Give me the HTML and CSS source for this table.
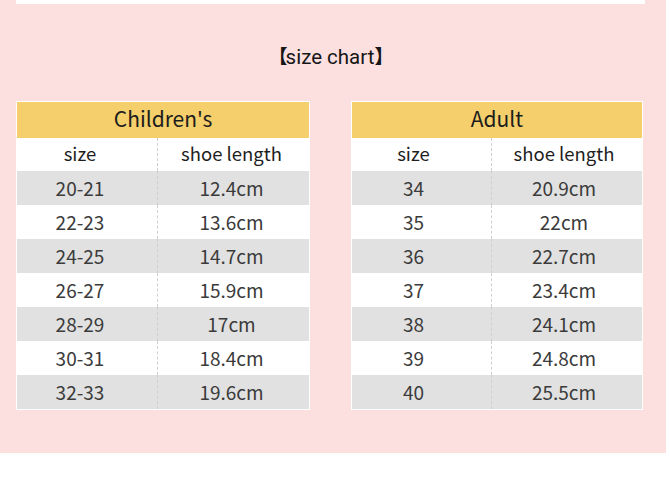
FILE: index.html
```html
<!DOCTYPE html>
<html>
<head>
<meta charset="utf-8">
<link rel="stylesheet" href="styles.css">
</head>
<body>
<div class="page">
  <div class="topbar"></div>
  <h1 class="title"><span class="br l">【</span><span class="tt">size chart</span><span class="br r">】</span></h1>
  <div class="tables">
    <div class="chart">
      <div class="chart-head">Children's</div>
      <div class="row sub"><div class="c1">size</div><div class="c2">shoe length</div></div>
      <div class="row g"><div class="c1">20-21</div><div class="c2">12.4cm</div></div>
      <div class="row"><div class="c1">22-23</div><div class="c2">13.6cm</div></div>
      <div class="row g"><div class="c1">24-25</div><div class="c2">14.7cm</div></div>
      <div class="row"><div class="c1">26-27</div><div class="c2">15.9cm</div></div>
      <div class="row g"><div class="c1">28-29</div><div class="c2">17cm</div></div>
      <div class="row"><div class="c1">30-31</div><div class="c2">18.4cm</div></div>
      <div class="row g"><div class="c1">32-33</div><div class="c2">19.6cm</div></div>
    </div>
    <div class="chart adult">
      <div class="chart-head">Adult</div>
      <div class="row sub"><div class="c1">size</div><div class="c2">shoe length</div></div>
      <div class="row g"><div class="c1">34</div><div class="c2">20.9cm</div></div>
      <div class="row"><div class="c1">35</div><div class="c2">22cm</div></div>
      <div class="row g"><div class="c1">36</div><div class="c2">22.7cm</div></div>
      <div class="row"><div class="c1">37</div><div class="c2">23.4cm</div></div>
      <div class="row g"><div class="c1">38</div><div class="c2">24.1cm</div></div>
      <div class="row"><div class="c1">39</div><div class="c2">24.8cm</div></div>
      <div class="row g"><div class="c1">40</div><div class="c2">25.5cm</div></div>
    </div>
  </div>
</div>
</body>
</html>
```
FILE: styles.css
```css
html, body {
  margin: 0;
  padding: 0;
  background: #ffffff;
}
.page {
  width: 666px;
  height: 453px;
  background: #fce0e0;
  overflow: hidden;
}
.topbar {
  width: 629px;
  height: 4px;
  margin-left: 16px;
  background: #ffffff;
}
.title {
  margin: 38px 0 0 0;
  height: 28px;
  line-height: 28px;
  text-align: center;
  font-family: "Roboto", "Liberation Sans", sans-serif;
  font-weight: 400;
  font-size: 20.5px;
  color: #161616;
  padding-right: 4px;
}
.title .br {
  font-family: "Noto Sans CJK SC", sans-serif;
  font-size: 19px;
  font-weight: 700;
}
.title .br.l {
  margin-left: -12px;
  margin-right: -2px;
}
.title .br.r {
  margin-left: 0;
  margin-right: -12px;
}
.tables {
  display: flex;
  gap: 41px;
  margin-top: 31px;
  padding-left: 16px;
}
.chart {
  width: 292px;
  background: #ffffff;
  padding: 1px;
  font-family: "Noto Sans CJK SC", "Noto Sans", sans-serif;
}
.chart.adult {
  width: 290px;
}
.chart-head {
  height: 36px;
  line-height: 32px;
  box-sizing: border-box;
  padding-bottom: 4px;
  background: #f4cf6b;
  text-align: center;
  font-size: 21px;
  color: #1c1c1c;
}
.row {
  display: flex;
  height: 34px;
  line-height: 34px;
  font-size: 19px;
  color: #3b3b3b;
}
.row.sub {
  height: 33px;
  line-height: 31px;
  color: #1e1e1e;
  font-size: 18.5px;
}
.row.g {
  background: #e1e1e1;
}
.c1 {
  width: 141px;
  box-sizing: border-box;
  padding-right: 14px;
  text-align: center;
  border-right: 1px dashed #cfcfcf;
}
.adult .c1 {
  width: 140px;
  padding-right: 16px;
}
.c2 {
  flex: 1;
  text-align: center;
  padding-right: 4px;
}
.adult .c2 {
  padding-right: 6px;
}
```
